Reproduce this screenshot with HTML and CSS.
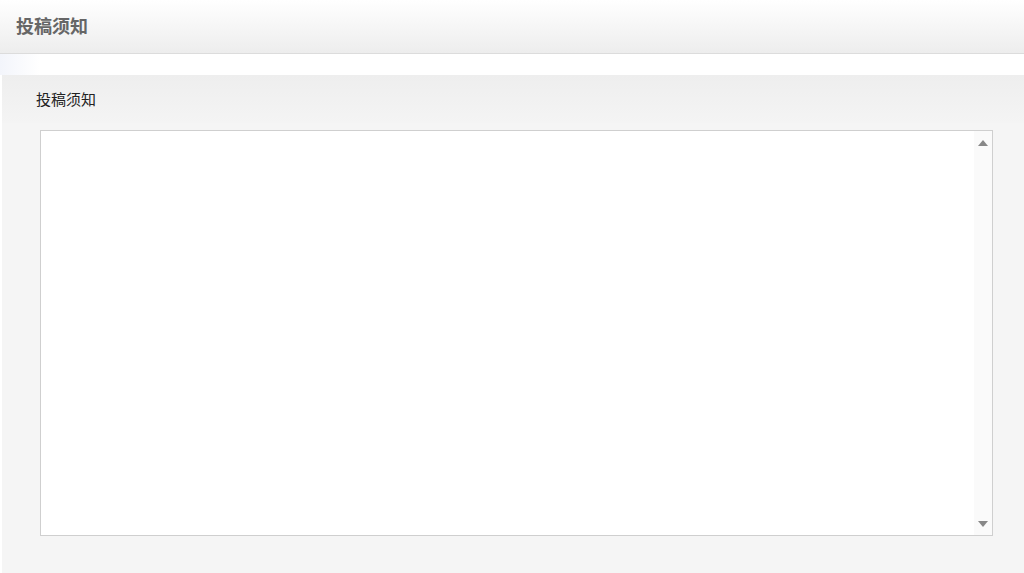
FILE: index.html
```html
<!DOCTYPE html>
<html lang="zh-CN">
<head>
    <meta charset="UTF-8">
    <title>投稿须知</title>
    <link rel="stylesheet" href="styles.css">
</head>
<body>

<!-- 页头 -->
<div class="page-head">投稿须知</div>

<div class="gap"></div>

<!-- 内容面板 -->
<div class="panel">
    <div class="panel-title">投稿须知</div>
    <div class="panel-body">
        <div class="notice-box">
            <div class="notice-text"></div>
            <div class="scroll-track">
                <span class="arrow-up"></span>
                <span class="arrow-down"></span>
            </div>
        </div>
    </div>
</div>

</body>
</html>
```

FILE: styles.css
```css
html, body {
    height: 100%;
}
body {
    margin: 0;
    font-family: "Liberation Sans", "Noto Sans CJK SC", sans-serif;
    background: #fff;
    display: flex;
    flex-direction: column;
    overflow: hidden;
}
.page-head {
    height: 53px;
    line-height: 54px;
    padding-left: 16px;
    font-size: 18px;
    font-weight: bold;
    color: #666;
    background: linear-gradient(to bottom, #ffffff, #ededed);
    border-bottom: 1px solid #dcdcdc;
    flex-shrink: 0;
}
.gap {
    height: 21px;
    flex-shrink: 0;
    background: linear-gradient(to right, #f3f5fb, #ffffff 40px);
}
.panel {
    flex: 1;
    margin-left: 2px;
    background: #f5f5f5;
    display: flex;
    flex-direction: column;
}
.panel-title {
    height: 48px;
    line-height: 50px;
    padding-left: 34px;
    font-size: 15px;
    color: #222;
    background: linear-gradient(to bottom, #eeeeee, #f4f4f4);
}
.panel-body {
    padding: 7px 31px 0 38px;
}
.notice-box {
    height: 404px;
    border: 1px solid #cfcfcf;
    background: #fff;
    display: flex;
}
.notice-text {
    flex: 1;
}
.scroll-track {
    width: 18px;
    background: #fafafa;
    display: flex;
    flex-direction: column;
    justify-content: space-between;
    align-items: center;
    padding: 9px 0 8px;
}
.arrow-up {
    width: 0;
    height: 0;
    border-left: 5px solid transparent;
    border-right: 5px solid transparent;
    border-bottom: 6px solid #888;
}
.arrow-down {
    width: 0;
    height: 0;
    border-left: 5px solid transparent;
    border-right: 5px solid transparent;
    border-top: 6px solid #888;
}
```
